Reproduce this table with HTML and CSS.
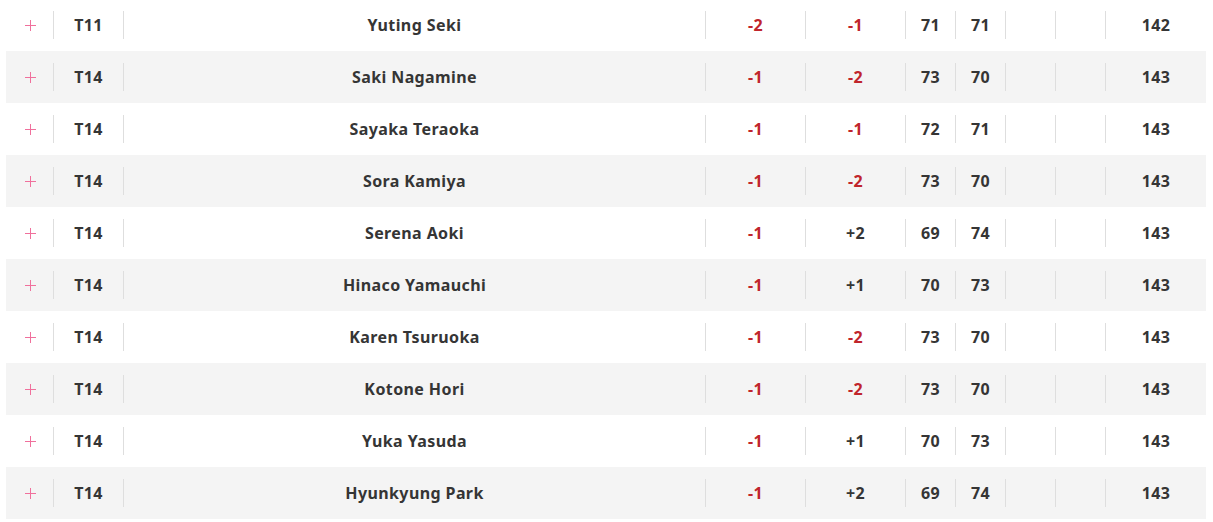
FILE: index.html
```html
<!DOCTYPE html>
<html>
<head>
<meta charset="utf-8">
<link rel="stylesheet" href="styles.css">
</head>
<body>
<div class="board">
  <div class="row"><div class="c plus"><span class="pl"></span></div><div class="c"><span class="in">T11</span></div><div class="c"><span class="in">Yuting Seki</span></div><div class="c"><span class="in red">-2</span></div><div class="c"><span class="in red">-1</span></div><div class="c"><span class="in">71</span></div><div class="c"><span class="in">71</span></div><div class="c"><span class="in"></span></div><div class="c"><span class="in"></span></div><div class="c"><span class="in">142</span></div></div>
  <div class="row"><div class="c plus"><span class="pl"></span></div><div class="c"><span class="in">T14</span></div><div class="c"><span class="in">Saki Nagamine</span></div><div class="c"><span class="in red">-1</span></div><div class="c"><span class="in red">-2</span></div><div class="c"><span class="in">73</span></div><div class="c"><span class="in">70</span></div><div class="c"><span class="in"></span></div><div class="c"><span class="in"></span></div><div class="c"><span class="in">143</span></div></div>
  <div class="row"><div class="c plus"><span class="pl"></span></div><div class="c"><span class="in">T14</span></div><div class="c"><span class="in">Sayaka Teraoka</span></div><div class="c"><span class="in red">-1</span></div><div class="c"><span class="in red">-1</span></div><div class="c"><span class="in">72</span></div><div class="c"><span class="in">71</span></div><div class="c"><span class="in"></span></div><div class="c"><span class="in"></span></div><div class="c"><span class="in">143</span></div></div>
  <div class="row"><div class="c plus"><span class="pl"></span></div><div class="c"><span class="in">T14</span></div><div class="c"><span class="in">Sora Kamiya</span></div><div class="c"><span class="in red">-1</span></div><div class="c"><span class="in red">-2</span></div><div class="c"><span class="in">73</span></div><div class="c"><span class="in">70</span></div><div class="c"><span class="in"></span></div><div class="c"><span class="in"></span></div><div class="c"><span class="in">143</span></div></div>
  <div class="row"><div class="c plus"><span class="pl"></span></div><div class="c"><span class="in">T14</span></div><div class="c"><span class="in">Serena Aoki</span></div><div class="c"><span class="in red">-1</span></div><div class="c"><span class="in">+2</span></div><div class="c"><span class="in">69</span></div><div class="c"><span class="in">74</span></div><div class="c"><span class="in"></span></div><div class="c"><span class="in"></span></div><div class="c"><span class="in">143</span></div></div>
  <div class="row"><div class="c plus"><span class="pl"></span></div><div class="c"><span class="in">T14</span></div><div class="c"><span class="in">Hinaco Yamauchi</span></div><div class="c"><span class="in red">-1</span></div><div class="c"><span class="in">+1</span></div><div class="c"><span class="in">70</span></div><div class="c"><span class="in">73</span></div><div class="c"><span class="in"></span></div><div class="c"><span class="in"></span></div><div class="c"><span class="in">143</span></div></div>
  <div class="row"><div class="c plus"><span class="pl"></span></div><div class="c"><span class="in">T14</span></div><div class="c"><span class="in">Karen Tsuruoka</span></div><div class="c"><span class="in red">-1</span></div><div class="c"><span class="in red">-2</span></div><div class="c"><span class="in">73</span></div><div class="c"><span class="in">70</span></div><div class="c"><span class="in"></span></div><div class="c"><span class="in"></span></div><div class="c"><span class="in">143</span></div></div>
  <div class="row"><div class="c plus"><span class="pl"></span></div><div class="c"><span class="in">T14</span></div><div class="c"><span class="in">Kotone Hori</span></div><div class="c"><span class="in red">-1</span></div><div class="c"><span class="in red">-2</span></div><div class="c"><span class="in">73</span></div><div class="c"><span class="in">70</span></div><div class="c"><span class="in"></span></div><div class="c"><span class="in"></span></div><div class="c"><span class="in">143</span></div></div>
  <div class="row"><div class="c plus"><span class="pl"></span></div><div class="c"><span class="in">T14</span></div><div class="c"><span class="in">Yuka Yasuda</span></div><div class="c"><span class="in red">-1</span></div><div class="c"><span class="in">+1</span></div><div class="c"><span class="in">70</span></div><div class="c"><span class="in">73</span></div><div class="c"><span class="in"></span></div><div class="c"><span class="in"></span></div><div class="c"><span class="in">143</span></div></div>
  <div class="row"><div class="c plus"><span class="pl"></span></div><div class="c"><span class="in">T14</span></div><div class="c"><span class="in">Hyunkyung Park</span></div><div class="c"><span class="in red">-1</span></div><div class="c"><span class="in">+2</span></div><div class="c"><span class="in">69</span></div><div class="c"><span class="in">74</span></div><div class="c"><span class="in"></span></div><div class="c"><span class="in"></span></div><div class="c"><span class="in">143</span></div></div>
</div>
</body>
</html>
```
FILE: styles.css
```css
html, body {
  margin: 0;
  padding: 0;
  background: #fff;
}
body {
  padding: 0 7px 0 6px;
  font-family: "Noto Sans", "Open Sans", sans-serif;
  font-weight: 700;
  font-size: 16px;
  letter-spacing: 0.4px;
  color: #353535;
}
.board {
  margin-top: -1px;
}
.row {
  display: grid;
  grid-template-columns: 47px 70px 582px 100px 100px 50px 50px 50px 50px 101px;
  height: 52px;
}
.row:nth-child(even) {
  background: #f4f4f4;
}
.c {
  display: flex;
  align-items: center;
}
.in {
  flex: 1;
  height: 28px;
  border-left: 1px solid #dedede;
  display: flex;
  align-items: center;
  justify-content: center;
}
.red {
  color: #c0252c;
}
.plus {
  justify-content: center;
}
.pl {
  position: relative;
  width: 11px;
  height: 11px;
  margin-left: 1px;
  margin-top: 1px;
}
.pl::before, .pl::after {
  content: "";
  position: absolute;
  background: #f0709c;
}
.pl::before {
  left: 0;
  top: 5px;
  width: 11px;
  height: 1px;
}
.pl::after {
  left: 5px;
  top: 0;
  width: 1px;
  height: 11px;
}
```
